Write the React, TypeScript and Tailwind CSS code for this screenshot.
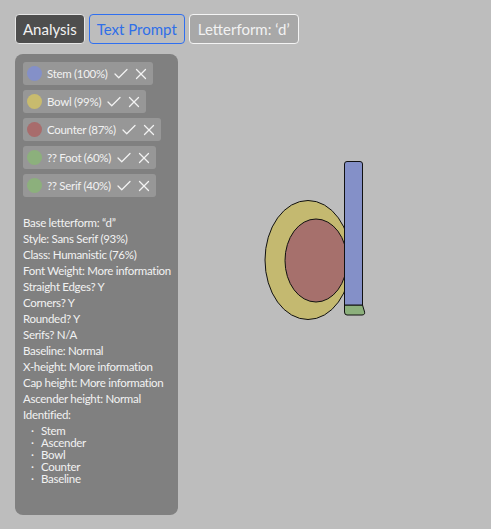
import React from "react";
import { Check, X } from "lucide-react";

const chips = [
  { label: "Stem (100%)", color: "bg-[#8490c8]" },
  { label: "Bowl (99%)", color: "bg-[#c8bb6e]" },
  { label: "Counter (87%)", color: "bg-[#a86c6c]" },
  { label: "?? Foot (60%)", color: "bg-[#8cb07c]" },
  { label: "?? Serif (40%)", color: "bg-[#8cb07c]" },
];

const lines = [
  "Base letterform: “d”",
  "Style: Sans Serif (93%)",
  "Class: Humanistic (76%)",
  "Font Weight: More information",
  "Straight Edges? Y",
  "Corners? Y",
  "Rounded? Y",
  "Serifs? N/A",
  "Baseline: Normal",
  "X-height: More information",
  "Cap height: More information",
  "Ascender height: Normal",
  "Identified:",
];

const items = ["Stem", "Ascender", "Bowl", "Counter", "Baseline"];

export default function App() {
  return (
    <div
      className="min-h-screen w-full bg-[#bdbdbd] pt-[14px] pl-[15px]"
      style={{ fontFamily: "Lato, 'Noto Sans', sans-serif" }}
    >
      <div className="flex gap-[4px]">
        <button className="h-[30px] px-[7px] rounded-[4px] border border-[#e6e6e6] bg-[#4e4e4e] text-[#f2f2f2] text-[15px] leading-none">
          Analysis
        </button>
        <button className="h-[30px] px-[7px] rounded-[4px] border border-[#2f6ff0] bg-transparent text-[#2f6fe8] text-[15px] leading-none">
          Text Prompt
        </button>
        <button className="h-[30px] px-[8px] rounded-[4px] border border-[#f4f4f4] bg-[#a8a8a8] text-[#f2f2f2] text-[15px] leading-none">
          Letterform: ‘d’
        </button>
      </div>
      <div className="flex mt-[10px]">
        <div className="w-[163px] h-[461px] shrink-0 rounded-[8px] bg-[#808080] p-[8px] text-[#f2f2f2] text-[11.5px] tracking-[-0.3px] whitespace-nowrap">
          <div className="flex flex-col items-start gap-[5px]">
            {chips.map((c) => (
              <div
                key={c.label}
                className="flex items-center h-[23px] rounded-[3px] bg-[#979797] pl-[4px] pr-[3px]"
              >
                <span className={`w-[15px] h-[15px] rounded-full ${c.color}`} />
                <span className="ml-[5px] leading-none">{c.label}</span>
                <Check className="ml-[4px] w-[18px] h-[18px]" strokeWidth={1.7} />
                <X className="ml-[2px] w-[18px] h-[18px]" strokeWidth={1.7} />
              </div>
            ))}
          </div>
          <div className="mt-[18px] leading-[16px]">
            {lines.map((l) => (
              <div key={l}>{l}</div>
            ))}
          </div>
          <div className="leading-[12px] mt-[2px]">
            {items.map((i) => (
              <div key={i} className="flex">
                <span className="w-[18px] pl-[8px]">·</span>
                <span>{i}</span>
              </div>
            ))}
          </div>
        </div>
        <div className="ml-[72px] mt-[96px]">
          <svg width="130" height="180" viewBox="250 150 130 180">
            <ellipse cx="308" cy="260" rx="43" ry="59.5" fill="#c4b970" stroke="#111" strokeWidth="1" />
            <ellipse cx="316" cy="260.5" rx="31" ry="41.5" fill="#a6706c" stroke="#111" strokeWidth="1" />
            <path
              d="M344.5 305 L362.5 305 L364 310 Q366 315 362 315 L347 315 Q344.5 315 344.5 312 Z"
              fill="#8cb07c"
              stroke="#111"
              strokeWidth="1"
            />
            <path
              d="M344.5 305 L344.5 164 Q344.5 161.5 347 161.5 L360 161.5 Q362.5 161.5 362.5 164 L362.5 305 Z"
              fill="#8490c8"
              stroke="#111"
              strokeWidth="1"
            />
          </svg>
        </div>
      </div>
    </div>
  );
}
